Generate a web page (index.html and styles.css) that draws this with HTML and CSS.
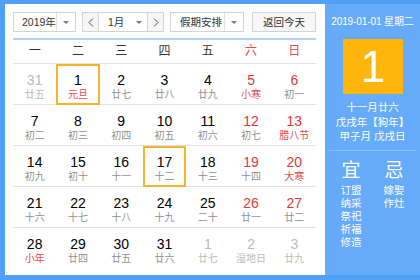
FILE: index.html
```html
<!DOCTYPE html>
<html lang="zh">
<head>
<meta charset="utf-8">
<link rel="stylesheet" href="styles.css">
</head>
<body>
<div class="frame">
  <div class="left">
    <div class="toolbar">
      <div class="sel sel-year"><span class="sel-text">2019年</span><span class="sel-arrow"><i class="tri"></i></span></div>
      <div class="month-group">
        <span class="nav"><svg width="6" height="9" viewBox="0 0 6 9"><path d="M5 0.5 L1 4.5 L5 8.5" fill="none" stroke="#555" stroke-width="1"/></svg></span>
        <div class="sel sel-month"><span class="sel-text">1月</span><span class="sel-arrow"><i class="tri"></i></span></div>
        <span class="nav"><svg width="6" height="9" viewBox="0 0 6 9"><path d="M1 0.5 L5 4.5 L1 8.5" fill="none" stroke="#555" stroke-width="1"/></svg></span>
      </div>
      <div class="sel sel-holiday"><span class="sel-text">假期安排</span><span class="sel-arrow"><i class="tri"></i></span></div>
      <div class="btn-today">返回今天</div>
    </div>
    <div class="hline"></div>
    <div class="weekdays">
      <span>一</span><span>二</span><span>三</span><span>四</span><span>五</span><span class="wk-red">六</span><span class="wk-red">日</span>
    </div>
    <div class="grid">
      <div class="row">
        <div class="cell other"><b>31</b><i>廿五</i></div>
        <div class="cell today"><b>1</b><i class="fest">元旦</i></div>
        <div class="cell"><b>2</b><i>廿七</i></div>
        <div class="cell"><b>3</b><i>廿八</i></div>
        <div class="cell"><b>4</b><i>廿九</i></div>
        <div class="cell wend"><b>5</b><i class="fest">小寒</i></div>
        <div class="cell wend"><b>6</b><i>初一</i></div>
      </div>
      <div class="row">
        <div class="cell"><b>7</b><i>初二</i></div>
        <div class="cell"><b>8</b><i>初三</i></div>
        <div class="cell"><b>9</b><i>初四</i></div>
        <div class="cell"><b>10</b><i>初五</i></div>
        <div class="cell"><b>11</b><i>初六</i></div>
        <div class="cell wend"><b>12</b><i>初七</i></div>
        <div class="cell wend"><b>13</b><i class="fest">腊八节</i></div>
      </div>
      <div class="row">
        <div class="cell"><b>14</b><i>初九</i></div>
        <div class="cell"><b>15</b><i>初十</i></div>
        <div class="cell"><b>16</b><i>十一</i></div>
        <div class="cell today"><b>17</b><i>十二</i></div>
        <div class="cell"><b>18</b><i>十三</i></div>
        <div class="cell wend"><b>19</b><i>十四</i></div>
        <div class="cell wend"><b>20</b><i class="fest">大寒</i></div>
      </div>
      <div class="row">
        <div class="cell"><b>21</b><i>十六</i></div>
        <div class="cell"><b>22</b><i>十七</i></div>
        <div class="cell"><b>23</b><i>十八</i></div>
        <div class="cell"><b>24</b><i>十九</i></div>
        <div class="cell"><b>25</b><i>二十</i></div>
        <div class="cell wend"><b>26</b><i>廿一</i></div>
        <div class="cell wend"><b>27</b><i>廿二</i></div>
      </div>
      <div class="row">
        <div class="cell"><b>28</b><i class="fest">小年</i></div>
        <div class="cell"><b>29</b><i>廿四</i></div>
        <div class="cell"><b>30</b><i>廿五</i></div>
        <div class="cell"><b>31</b><i>廿六</i></div>
        <div class="cell other"><b>1</b><i>廿七</i></div>
        <div class="cell other"><b>2</b><i>湿地日</i></div>
        <div class="cell other"><b>3</b><i>廿九</i></div>
      </div>
    </div>
  </div>
  <div class="right">
    <div class="r-date">2019-01-01 星期二</div>
    <div class="r-day">1</div>
    <div class="r-lunar">
      <div>十一月廿六</div>
      <div>戊戌年【狗年】</div>
      <div>甲子月 戊戌日</div>
    </div>
    <div class="r-line"></div>
    <div class="r-yiji">
      <div class="r-col">
        <div class="r-big">宜</div>
        <div>订盟</div><div>纳采</div><div>祭祀</div><div>祈福</div><div>修造</div>
      </div>
      <div class="r-col">
        <div class="r-big">忌</div>
        <div>嫁娶</div><div>作灶</div>
      </div>
    </div>
  </div>
</div>
</body>
</html>
```

FILE: styles.css
```css
* { box-sizing: border-box; margin: 0; padding: 0; }
html, body { width: 420px; height: 280px; overflow: hidden; }
body {
  background: #50a0f5;
  font-family: "Liberation Sans", "Noto Sans CJK SC", sans-serif;
  color: #333;
}
.frame {
  display: flex;
  padding: 4px 0 5px 5px;
  height: 280px;
}
.left {
  width: 320px;
  height: 271px;
  background: #fff;
  padding: 8px 9px 0 8px;
}
.toolbar {
  display: flex;
  align-items: center;
  height: 20px;
  font-size: 10.5px;
}
.sel {
  display: flex;
  height: 20px;
  border: 1px solid #d4d4d4;
  background: #fff;
}
.sel-text {
  flex: 1;
  line-height: 18px;
  padding-left: 8px;
  color: #333;
}
.sel-arrow {
  width: 19px;
  border-left: 1px solid #e2e2e2;
  display: flex;
  align-items: center;
  justify-content: center;
}
.tri {
  width: 0; height: 0;
  border-left: 3px solid transparent;
  border-right: 3px solid transparent;
  border-top: 3px solid #777;
}
.sel-year { width: 63px; }
.month-group {
  display: flex;
  margin-left: 6px;
  width: 82px;
}
.nav {
  width: 17px;
  height: 20px;
  border: 1px solid #d4d4d4;
  background: #f6f6f6;
  display: flex;
  align-items: center;
  justify-content: center;
}
.sel-month { width: 48px; border-left: none; border-right: none; }
.sel-month .sel-text { padding-left: 9px; }
.sel-month .sel-arrow { border-left: none; width: 17px; }
.sel-holiday { width: 74px; margin-left: 6px; }
.sel-holiday .sel-text { padding-left: 9px; }
.btn-today {
  margin-left: auto;
  width: 64px;
  height: 20px;
  border: 1px solid #d4d4d4;
  background: #f7f7f7;
  text-align: center;
  line-height: 18px;
  color: #333;
}
.hline {
  margin-top: 6px;
  height: 2px;
  background: #b4d2f6;
}
.weekdays {
  display: grid;
  grid-template-columns: repeat(7, 1fr);
  height: 24px;
  border-bottom: 1px solid #e3e3e3;
  font-size: 12px;
  line-height: 23px;
  text-align: center;
  color: #333;
}
.wk-red { color: #e24b4b; }
.row {
  display: grid;
  grid-template-columns: repeat(7, 1fr);
  height: 41px;
  border-bottom: 1px solid #e3e3e3;
}
.row:last-child { border-bottom: none; }
.cell {
  display: flex;
  flex-direction: column;
  align-items: center;
  border: 2px solid transparent;
  margin-bottom: -1px;
  padding-top: 6px;
}
.cell b {
  font-weight: normal;
  font-size: 14px;
  line-height: 16px;
  color: #000;
}
.cell i {
  font-style: normal;
  font-size: 10px;
  line-height: 13px;
  color: #8f8f8f;
}
.cell .fest { color: #e24b4b; }
.cell.wend b { color: #e03a3a; }
.cell.other b { color: #bbb; }
.cell.other i { color: #bbb; }
.cell.today { border-color: #f5b52a; }
.right {
  flex: 1;
  height: 271px;
  background: #66abf9;
  color: #fff;
  display: flex;
  flex-direction: column;
  align-items: center;
}
.r-date {
  margin-top: 11px;
  font-size: 10px;
  line-height: 14px;
  white-space: nowrap;
  letter-spacing: -0.1px;
}
.r-day {
  margin-top: 10px;
  width: 60px;
  height: 55px;
  background: #ffb60c;
  font-size: 44px;
  line-height: 55px;
  text-align: center;
  margin-left: 1px;
}
.r-lunar {
  margin-top: 6px;
  font-size: 10.5px;
  line-height: 14.5px;
  text-align: center;
}
.r-line {
  margin-top: 6px;
  width: 87px;
  height: 1px;
  background: #8cc0fb;
}
.r-yiji {
  display: flex;
  width: 86px;
}
.r-col {
  flex: 1;
  text-align: center;
  font-size: 10.5px;
  line-height: 13.2px;
}
.r-big {
  font-size: 19px;
  line-height: 24px;
  margin-top: 8px;
  margin-bottom: 1px;
}
```
